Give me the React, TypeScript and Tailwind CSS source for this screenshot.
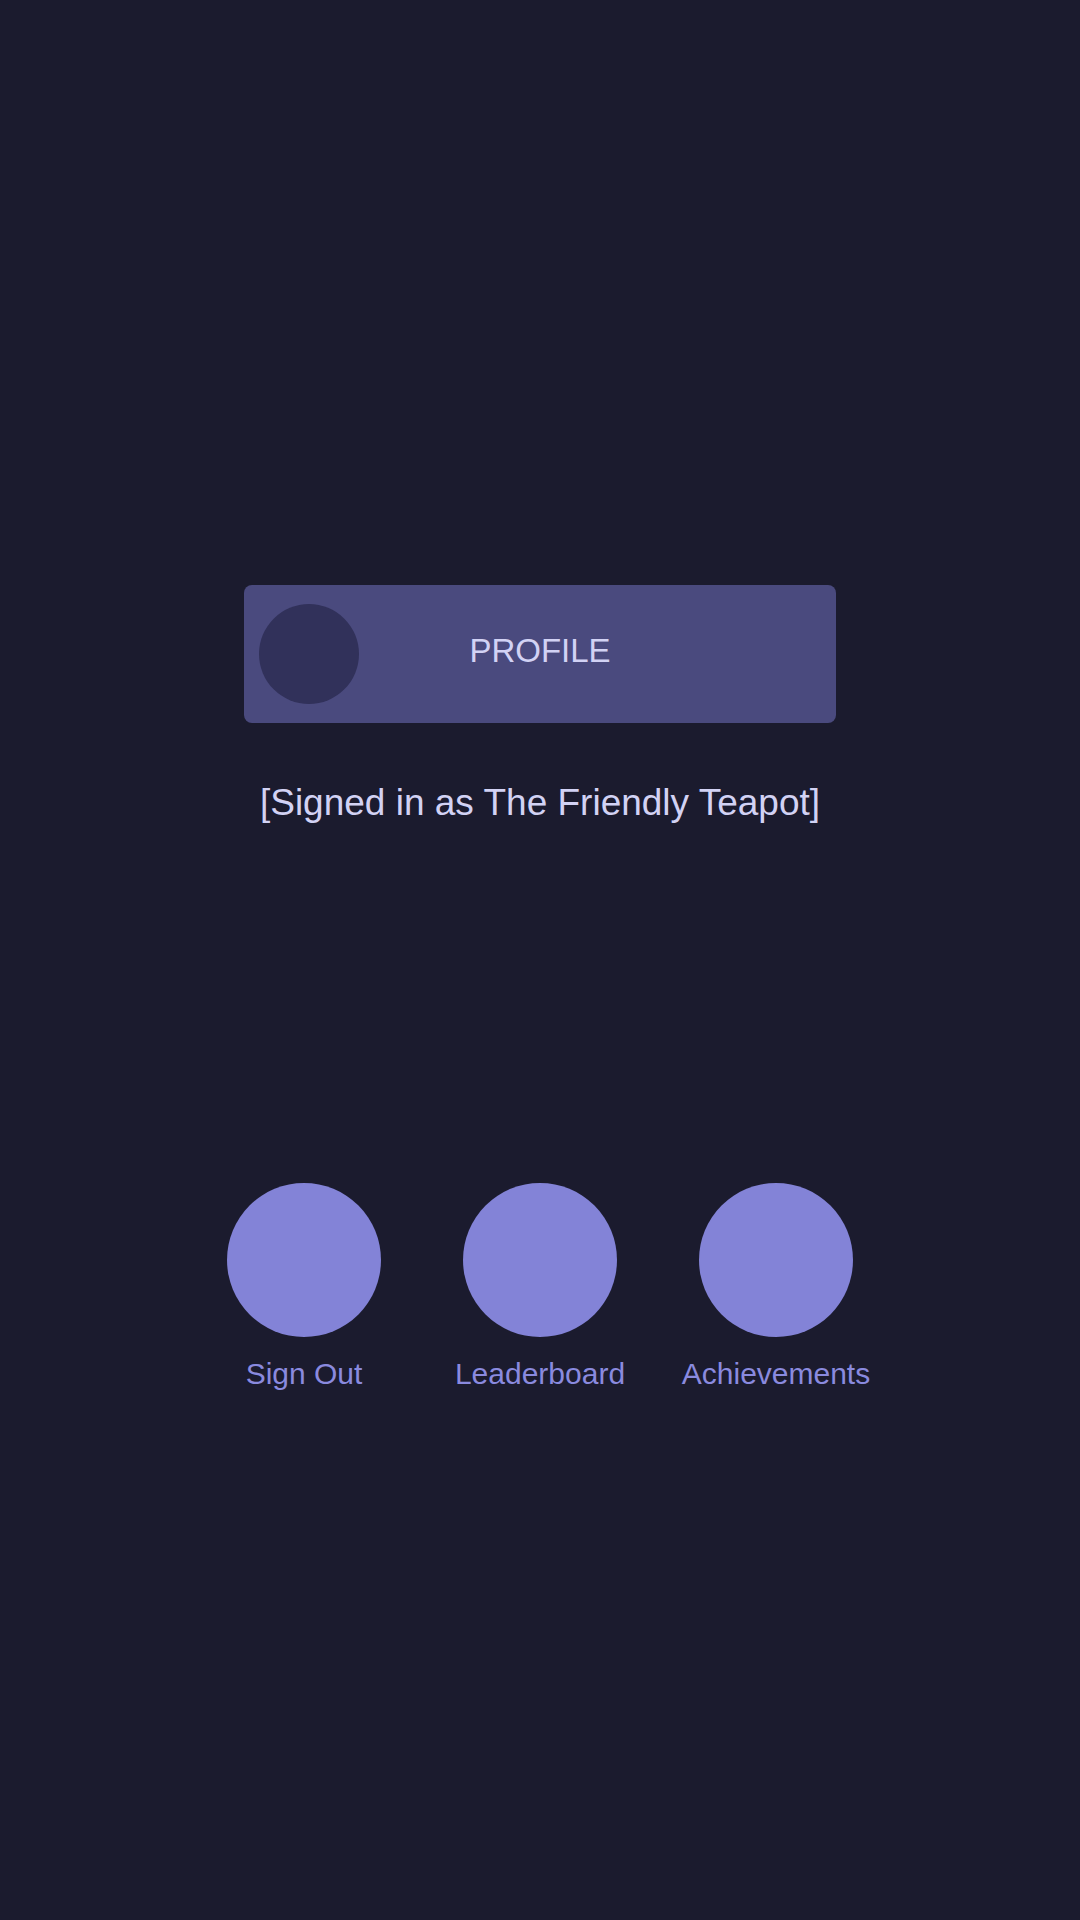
import React from 'react';

const actions = ['Sign Out', 'Leaderboard', 'Achievements'];

export default function App() {
    return (
        <div
            className="w-full h-[1920px] bg-[#1b1b2e] flex flex-col items-center pt-[585px]"
            style={{ fontFamily: '"Liberation Sans", Arial, sans-serif' }}
        >
            {/* Profile button */}
            <button className="w-[592px] h-[138px] rounded-lg bg-[#4a4a7e] grid grid-cols-[100px_1fr_100px] items-center px-[15px]">
                <div className="w-[100px] h-[100px] rounded-full bg-[#31315a]" />
                <span className="text-[33px] leading-none text-[#d2d2f4] -mt-2">PROFILE</span>
                <div />
            </button>

            <p className="mt-[52px] text-[37px] text-[#d2d2f4]">[Signed in as The Friendly Teapot]</p>

            {/* Bottom actions */}
            <div className="mt-[352px] flex">
                {actions.map((label) => (
                    <div key={label} className="w-[236px] flex flex-col items-center">
                        <div className="w-[154px] h-[154px] rounded-full bg-[#8383d7]" />
                        <span className="mt-[14px] text-[30px] text-[#8a8adf]">{label}</span>
                    </div>
                ))}
            </div>
        </div>
    );
}
